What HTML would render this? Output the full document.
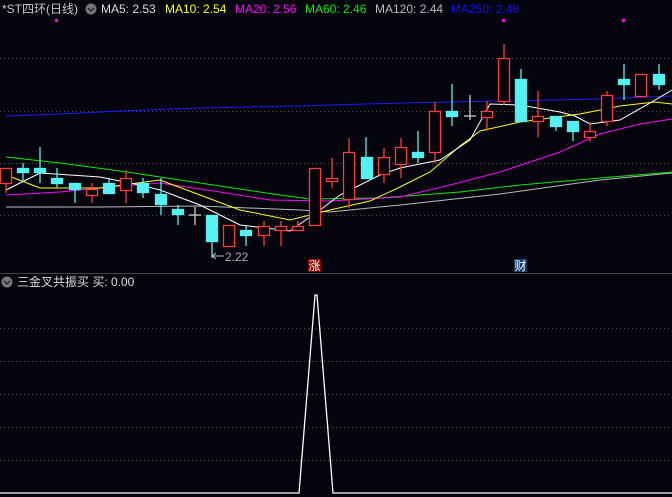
<!DOCTYPE html><html><head><meta charset="utf-8"><style>
html,body{margin:0;padding:0;background:#04040c;width:672px;height:497px;overflow:hidden}
svg{display:block}
text{font-family:"Liberation Sans","Noto Sans CJK SC",sans-serif;font-size:12px}
</style></head><body>
<svg width="672" height="497" viewBox="0 0 672 497" xmlns="http://www.w3.org/2000/svg">
<rect width="672" height="497" fill="#04040c"/>
<g stroke="#555" stroke-dasharray="1 3" stroke-width="1">
<line x1="0" y1="58.5" x2="672" y2="58.5"/><line x1="0" y1="111.5" x2="672" y2="111.5"/>
<line x1="0" y1="163.5" x2="672" y2="163.5"/><line x1="0" y1="215.5" x2="672" y2="215.5"/>
<line x1="0" y1="328.5" x2="672" y2="328.5"/><line x1="0" y1="361.5" x2="672" y2="361.5"/>
<line x1="0" y1="394.5" x2="672" y2="394.5"/><line x1="0" y1="427.5" x2="672" y2="427.5"/>
<line x1="0" y1="460.5" x2="672" y2="460.5"/>
</g>
<line x1="0" y1="273.5" x2="672" y2="273.5" stroke="#444"/>
<text x="2" y="13" fill="#c8c8c8">*ST四环(日线)</text>
<circle cx="91" cy="9" r="5.5" fill="#777"/><path d="M88 8l3 3 3-3" stroke="#222" fill="none" stroke-width="1.3"/>
<text x="101" y="13" fill="#ddd">MA5: 2.53</text>
<text x="165" y="13" fill="#ffff00">MA10: 2.54</text>
<text x="235" y="13" fill="#ff00ff">MA20: 2.56</text>
<text x="305" y="13" fill="#00ee00">MA60: 2.46</text>
<text x="375" y="13" fill="#bbb">MA120: 2.44</text>
<text x="451" y="13" fill="#1010ff">MA250: 2.48</text>
<rect x="55" y="19" width="3" height="3" fill="#f0f"/><rect x="502" y="19" width="3" height="3" fill="#f0f"/><rect x="622" y="19" width="3" height="3" fill="#f0f"/>
<g fill="none" stroke-width="1">
<polyline stroke="#1a1aff" points="6,116 60,114 120,111 200,108 300,106 400,103 500,101 600,99 672,96"/>
<polyline stroke="#bbb" points="6,207 100,207 200,206 300,210 330,212 400,205 500,194 600,180 672,173"/>
<polyline stroke="#00ee00" points="6,157 60,163 120,171 200,183 280,195 310,199 380,198 460,192 520,185 600,178 672,172"/>
<polyline stroke="#ff00ff" points="6,195 60,192 110,187 160,183 220,192 270,200 330,201 400,197 450,185 500,172 560,152 600,134 640,124 672,119"/>
<polyline stroke="#ffff00" points="6,175 40,188 100,188 160,180 200,195 240,210 290,220 330,210 370,201 400,187 430,172 460,146 480,131 520,122 580,114 620,106 655,102 672,104"/>
<polyline stroke="#fff" points="6,190 40,173 100,177 140,185 160,190 200,205 240,225 290,231 320,210 340,195 380,175 400,168 440,160 470,140 490,104 520,105 560,112 575,116 590,124 620,120 650,103 672,90"/>
</g>
<g stroke-width="1.3">
<g stroke="#ff3b3b" fill="#04040c">
<line x1="6" y1="168" x2="6" y2="193"/><rect x="0.5" y="168.5" width="11" height="15"/>
<line x1="92" y1="183" x2="92" y2="203"/><rect x="86.5" y="189.5" width="11" height="6"/>
<line x1="126" y1="170" x2="126" y2="203"/><rect x="120.5" y="178.5" width="11" height="12"/>
<rect x="223.5" y="225.5" width="11" height="21"/>
<line x1="264" y1="221" x2="264" y2="246"/><rect x="258.5" y="226.5" width="11" height="9"/>
<line x1="281" y1="221" x2="281" y2="246"/><rect x="275.5" y="226.5" width="11" height="4"/>
<line x1="298" y1="221" x2="298" y2="230"/><rect x="292.5" y="226.5" width="11" height="4"/>
<rect x="309.5" y="168.5" width="11" height="57"/>
<line x1="332" y1="158" x2="332" y2="188"/><rect x="326.5" y="178.5" width="11" height="3"/>
<line x1="349" y1="138" x2="349" y2="208"/><rect x="343.5" y="152.5" width="11" height="47"/>
<line x1="384" y1="148" x2="384" y2="183"/><rect x="378.5" y="157.5" width="11" height="17"/>
<line x1="401" y1="138" x2="401" y2="178"/><rect x="395.5" y="147.5" width="11" height="17"/>
<line x1="435" y1="102" x2="435" y2="163"/><rect x="429.5" y="111.5" width="11" height="41"/>
<line x1="487" y1="101" x2="487" y2="131"/><rect x="481.5" y="111.5" width="11" height="6"/>
<line x1="504" y1="44" x2="504" y2="105"/><rect x="498.5" y="58.5" width="11" height="43"/>
<line x1="538" y1="91" x2="538" y2="137"/><rect x="532.5" y="116.5" width="11" height="5"/>
<line x1="590" y1="122" x2="590" y2="142"/><rect x="584.5" y="131.5" width="11" height="6"/>
<line x1="607" y1="91" x2="607" y2="126"/><rect x="601.5" y="95.5" width="11" height="26"/>
<rect x="635.5" y="74.5" width="11" height="22"/>
</g>
<g stroke="#55f0f0" fill="#55f0f0">
<line x1="23" y1="163" x2="23" y2="182"/><rect x="17.5" y="168.5" width="11" height="4"/>
<line x1="40" y1="147" x2="40" y2="183"/><rect x="34.5" y="168.5" width="11" height="4"/>
<line x1="57" y1="168" x2="57" y2="188"/><rect x="51.5" y="178.5" width="11" height="5"/>
<line x1="75" y1="183" x2="75" y2="203"/><rect x="69.5" y="183.5" width="11" height="6"/>
<line x1="109" y1="178" x2="109" y2="193"/><rect x="103.5" y="183.5" width="11" height="10"/>
<line x1="143" y1="178" x2="143" y2="198"/><rect x="137.5" y="183.5" width="11" height="9"/>
<line x1="161" y1="178" x2="161" y2="215"/><rect x="155.5" y="194.5" width="11" height="10"/>
<line x1="178" y1="205" x2="178" y2="225"/><rect x="172.5" y="209.5" width="11" height="5"/>
<line x1="212" y1="215" x2="212" y2="258"/><rect x="206.5" y="215.5" width="11" height="26"/>
<line x1="246" y1="226" x2="246" y2="246"/><rect x="240.5" y="230.5" width="11" height="5"/>
<line x1="366" y1="137" x2="366" y2="178"/><rect x="361.5" y="157.5" width="11" height="21"/>
<line x1="418" y1="131" x2="418" y2="163"/><rect x="412.5" y="152.5" width="11" height="5"/>
<line x1="452" y1="84" x2="452" y2="126"/><rect x="446.5" y="111.5" width="11" height="5"/>
<line x1="521" y1="69" x2="521" y2="121"/><rect x="515.5" y="79.5" width="11" height="42"/>
<line x1="556" y1="116" x2="556" y2="131"/><rect x="550.5" y="116.5" width="11" height="10"/>
<line x1="573" y1="121" x2="573" y2="141"/><rect x="567.5" y="121.5" width="11" height="10"/>
<line x1="624" y1="64" x2="624" y2="100"/><rect x="618.5" y="79.5" width="11" height="5"/>
<line x1="659" y1="64" x2="659" y2="90"/><rect x="653.5" y="74.5" width="11" height="10"/>
</g>
<g stroke="#ccc">
<line x1="195" y1="207" x2="195" y2="225"/><line x1="189" y1="215" x2="201" y2="215"/>
<line x1="470" y1="95" x2="470" y2="120"/><line x1="464" y1="116" x2="476" y2="116"/>
</g>
</g>
<path d="M212 256h12M212 256l4-3M212 256l4 3" stroke="#bbb" fill="none"/>
<text x="225" y="261" fill="#aab" font-size="12">2.22</text>
<rect x="308" y="259" width="13" height="13" fill="#8a0000"/><text x="308.5" y="270" fill="#fff" font-size="12">涨</text>
<rect x="514" y="259" width="13" height="13" fill="#123a6a"/><text x="514.5" y="270" fill="#fff" font-size="12">财</text>
<circle cx="7" cy="282" r="5.5" fill="#777"/><path d="M4 281l3 3 3-3" stroke="#222" fill="none" stroke-width="1.3"/>
<text x="17" y="286" fill="#ddd">三金叉共振买  买: 0.00</text>
<polyline fill="none" stroke="#fff" stroke-width="1.3" points="0,493 299,493 315,295 317,295 333,493 672,493"/>
</svg>
</body></html>
